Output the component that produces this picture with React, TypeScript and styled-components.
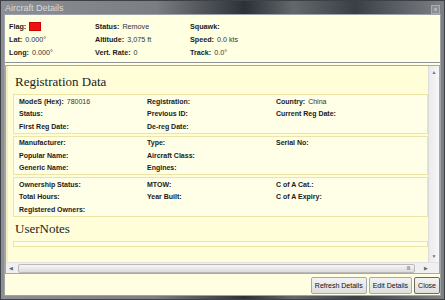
import React from 'react';
import styled, { createGlobalStyle } from 'styled-components';

const GlobalStyle = createGlobalStyle`
  html, body { margin: 0; padding: 0; background: #6d7176; }
  * { box-sizing: border-box; }
`;

const Window = styled.div`
  width: 445px;
  height: 300px;
  display: flex;
  flex-direction: column;
  background: linear-gradient(90deg, #8c9094 0%, #7a7e82 35%, #2c3138 55%, #63686d 66%, #3a3f46 80%, #7d8186 100%);
  border: 1px solid #3d4146;
  font-family: "Liberation Sans", Arial, sans-serif;
  overflow: hidden;
`;

const TitleBar = styled.div`
  height: 13px;
  display: flex;
  align-items: center;
  justify-content: space-between;
  padding: 0 4px 0 4px;
`;

const Title = styled.span`
  font-size: 9px;
  color: #d9dadb;
`;

const CloseBox = styled.div`
  width: 9px;
  height: 9px;
  margin-top: 3px;
  border: 1px solid #a9adb1;
  background: #8a8e93;
  color: #e6e6e6;
  font-size: 6px;
  line-height: 7px;
  text-align: center;
`;

const Body = styled.div`
  flex: 1;
  margin: 0 3px 3px 3px;
  display: flex;
  flex-direction: column;
  background: #fffee0;
  border: 1px solid #9fa3a7;
  min-height: 0;
`;

const Header = styled.div`
  height: 48px;
  padding: 5px 4px 0 4px;
  display: grid;
  grid-template-columns: 86px 95px 1fr;
  grid-auto-rows: 13px;
  background: #ffffe1;
  border-bottom: 1px solid #8e9296;
`;

const Field = styled.div<{ $size?: number }>`
  font-size: ${p => p.$size || 7}px;
  color: #1a1a1a;
  display: flex;
  align-items: center;
  white-space: nowrap;
  b { font-weight: bold; margin-right: 3px; }
  span { font-weight: normal; color: #333; }
`;

const FlagSwatch = styled.i`
  display: inline-block;
  width: 12px;
  height: 9px;
  background: #ee1111;
  border: 1px solid #c00;
`;

const ScrollFrame = styled.div`
  flex: 1;
  margin-top: 2px;
  display: flex;
  flex-direction: column;
  border: 1px solid #a8a8a0;
  min-height: 0;
`;

const ScrollMain = styled.div`
  flex: 1;
  display: flex;
  min-height: 0;
`;

const Viewport = styled.div`
  flex: 1;
  overflow: hidden;
  padding: 6px 0 0 5px;
  background: #fffed9;
  border-left: 2px solid #f4efc0;
`;

const VScroll = styled.div`
  width: 11px;
  display: flex;
  flex-direction: column;
  justify-content: space-between;
  align-items: center;
  background: linear-gradient(90deg, #ebebeb, #f7f7f7);
  border-left: 1px solid #dcdcdc;
  color: #777;
  font-size: 5px;
  padding: 3px 0;
`;

const HScrollRow = styled.div`
  height: 11px;
  display: flex;
  background: #f0f0f0;
  border-top: 1px solid #e2e2e2;
`;

const HScroll = styled.div`
  flex: 1;
  display: flex;
  align-items: center;
  padding-left: 3px;
  color: #666;
  font-size: 5px;
  gap: 5px;
`;

const Thumb = styled.div`
  flex: 1;
  height: 9px;
  border: 1px solid #b9b9b9;
  border-radius: 2px;
  background: linear-gradient(180deg, #f6f6f6, #dcdcdc);
  display: flex;
  justify-content: flex-end;
  align-items: center;
  padding-right: 4px;
  color: #777;
  font-size: 6px;
  letter-spacing: -0.5px;
  margin-right: 4px;
`;

const Corner = styled.div`
  width: 11px;
`;

const SectionTitle = styled.div`
  font-family: "Liberation Serif", "Times New Roman", serif;
  font-size: 13px;
  color: #222;
  padding: 2px 0 4px 2px;
`;

const Group = styled.div`
  width: 415px;
  display: grid;
  grid-template-columns: 128px 129px 1fr;
  grid-auto-rows: 12.5px;
  padding: 0 5px;
  margin-bottom: 2px;
  border: 1px solid #ece4a4;
  background: #fffee6;
`;

const EmptyGroup = styled.div`
  width: 415px;
  height: 6px;
  border: 1px solid #ece4a4;
  background: #fffee6;
`;

const ButtonBar = styled.div`
  height: 21px;
  display: flex;
  justify-content: flex-end;
  align-items: flex-end;
  gap: 2px;
  padding-bottom: 1px;
`;

const Button = styled.button<{ $focused?: boolean }>`
  height: 17px;
  padding: 0 3px;
  font-family: "Liberation Sans", Arial, sans-serif;
  font-size: 7px;
  color: #111;
  background: linear-gradient(180deg, #f4f4f4, #dedede);
  border: 1px solid ${p => (p.$focused ? '#6a6a6a' : '#a8a8a8')};
  border-radius: 2px;
`;

type Item = [string, string?];

const groups: Item[][] = [
  [['ModeS (Hex):', '780016'], ['Registration:'], ['Country:', 'China'], ['Status:'], ['Previous ID:'], ['Current Reg Date:'], ['First Reg Date:'], ['De-reg Date:'], ['']],
  [['Manufacturer:'], ['Type:'], ['Serial No:'], ['Popular Name:'], ['Aircraft Class:'], [''], ['Generic Name:'], ['Engines:'], ['']],
  [['Ownership Status:'], ['MTOW:'], ['C of A Cat.:'], ['Total Hours:'], ['Year Built:'], ['C of A Expiry:'], ['Registered Owners:'], [''], ['']]
];

const header: Item[] = [
  ['Flag:'], ['Status:', 'Remove'], ['Squawk:'],
  ['Lat:', '0.000°'], ['Altitude:', '3,075 ft'], ['Speed:', '0.0 kts'],
  ['Long:', '0.000°'], ['Vert. Rate:', '0'], ['Track:', '0.0°']
];

function App () {
  return (
    <>
      <GlobalStyle />
      <Window>
        <TitleBar>
          <Title>Aircraft Details</Title>
          <CloseBox>x</CloseBox>
        </TitleBar>
        <Body>
          <Header>
            {header.map(([label, value], i) => (
              <Field key={i} $size={7.2}>
                <b>{label}</b>
                {i === 0 ? <FlagSwatch /> : <span>{value}</span>}
              </Field>
            ))}
          </Header>
          <ScrollFrame>
            <ScrollMain>
              <Viewport>
                <SectionTitle>Registration Data</SectionTitle>
                {groups.map((g, gi) => (
                  <Group key={gi}>
                    {g.map(([label, value], i) => (
                      <Field key={i}>
                        <b>{label}</b>
                        {value && <span>{value}</span>}
                      </Field>
                    ))}
                  </Group>
                ))}
                <SectionTitle>UserNotes</SectionTitle>
                <EmptyGroup />
              </Viewport>
              <VScroll>
                <span>▲</span>
                <span>▼</span>
              </VScroll>
            </ScrollMain>
            <HScrollRow>
              <HScroll>
                <span>◀</span>
                <Thumb>III</Thumb>
                <span>▶</span>
              </HScroll>
              <Corner />
            </HScrollRow>
          </ScrollFrame>
          <ButtonBar>
            <Button>Refresh Details</Button>
            <Button>Edit Details</Button>
            <Button $focused>Close</Button>
          </ButtonBar>
        </Body>
      </Window>
    </>
  );
}

export default App;
